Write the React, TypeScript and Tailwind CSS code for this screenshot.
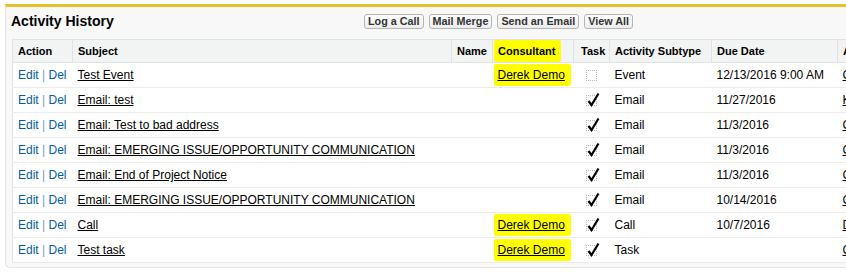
import React from 'react';

type Row = {
  subject: string;
  consultant?: string;
  done: boolean;
  subtype: string;
  due: string;
  assigned: string;
};

const rows: Row[] = [
  { subject: 'Test Event', consultant: 'Derek Demo', done: false, subtype: 'Event', due: '12/13/2016 9:00 AM', assigned: 'C' },
  { subject: 'Email: test', done: true, subtype: 'Email', due: '11/27/2016', assigned: 'K' },
  { subject: 'Email: Test to bad address', done: true, subtype: 'Email', due: '11/3/2016', assigned: 'C' },
  { subject: 'Email: EMERGING ISSUE/OPPORTUNITY COMMUNICATION', done: true, subtype: 'Email', due: '11/3/2016', assigned: 'C' },
  { subject: 'Email: End of Project Notice', done: true, subtype: 'Email', due: '11/3/2016', assigned: 'C' },
  { subject: 'Email: EMERGING ISSUE/OPPORTUNITY COMMUNICATION', done: true, subtype: 'Email', due: '10/14/2016', assigned: 'C' },
  { subject: 'Call', consultant: 'Derek Demo', done: true, subtype: 'Call', due: '10/7/2016', assigned: 'D' },
  { subject: 'Test task', consultant: 'Derek Demo', done: true, subtype: 'Task', due: '', assigned: 'C' },
];

const buttons = ['Log a Call', 'Mail Merge', 'Send an Email', 'View All'];

const TaskBox: React.FC<{ done: boolean }> = ({ done }) => (
  <span className="relative inline-block w-[11px] h-[11px] border border-dotted border-[#b9b9b9] align-middle">
    {done && (
      <svg className="absolute left-[0px] top-[-4px]" width="13" height="15" viewBox="0 0 13 15">
        <path d="M1.5 9 L4.5 13 L11.5 1.5" fill="none" stroke="#000" strokeWidth="2.2" strokeLinejoin="miter" />
      </svg>
    )}
  </span>
);

const Marker: React.FC<{ children: React.ReactNode; tall?: boolean }> = ({ children, tall }) => (
  <span className={`bg-[#ffff00] -ml-[4px] pl-[4px] pr-[6px] rounded-[2px] ${tall ? 'py-[5px]' : 'py-[4px]'}`}>{children}</span>
);

export default function App() {
  const th = 'px-[5px] text-left font-bold text-[11px] text-black border-r border-[#e0e3e5] bg-[#f2f3f3] whitespace-nowrap';
  const td = 'px-[5px] border-b border-[#ececec] align-middle';

  return (
    <div className="w-[846px] h-[272px] overflow-hidden bg-white pt-[4px] pl-[5px] font-['Liberation_Sans',Arial,sans-serif]">
      <div className="w-[900px] bg-[#f8f8f8] border-t-[3px] border-t-[#e6c12e] border-l border-b border-l-[#e3e3e3] border-b-[#e3e3e3] rounded-bl-[5px] pl-[6px] pb-[4px]">
        <div className="h-[32px] pb-[4px] flex items-center">
          <h3 className="w-[353px] -ml-[1px] text-[14px] font-bold text-black leading-none">Activity History</h3>
          <div className="flex gap-[5px]">
            {buttons.map((b) => (
              <span
                key={b}
                className="h-[15px] px-[3px] flex items-center border border-[#b5b5b5] rounded-[3px] bg-gradient-to-b from-white to-[#ececec] text-[10.8px] font-bold text-[#333]"
              >
                {b}
              </span>
            ))}
          </div>
        </div>
        <table className="table-fixed border-collapse w-[888px] bg-white border border-[#e0e3e5] text-[12px] text-black">
          <colgroup>
            <col className="w-[60px]" />
            <col className="w-[379px]" />
            <col className="w-[41px]" />
            <col className="w-[81px]" />
            <col className="w-[36px]" />
            <col className="w-[102px]" />
            <col className="w-[126px]" />
            <col />
          </colgroup>
          <thead>
            <tr className="h-[23px] border-b border-[#e0e3e5]">
              <th className={th}>Action</th>
              <th className={th}>Subject</th>
              <th className={th}>Name</th>
              <th className={th}>
                <Marker tall>Consultant</Marker>
              </th>
              <th className={`${th} pl-[7px]`}>Task</th>
              <th className={th}>Activity Subtype</th>
              <th className={th}>Due Date</th>
              <th className={th}>Assigned To</th>
            </tr>
          </thead>
          <tbody>
            {rows.map((r, i) => (
              <tr key={i} className="h-[25px]">
                <td className={`${td} text-[#015ba7] whitespace-nowrap`}>
                  Edit <span className="text-[#7a9cc0]">|</span> Del
                </td>
                <td className={`${td} whitespace-nowrap`}>
                  <span className="underline">{r.subject}</span>
                </td>
                <td className={td}></td>
                <td className={`${td} whitespace-nowrap`}>
                  {r.consultant && (
                    <Marker>
                      <span className="underline">{r.consultant}</span>
                    </Marker>
                  )}
                </td>
                <td className={`${td} pl-[12px]`}>
                  <TaskBox done={r.done} />
                </td>
                <td className={td}>{r.subtype}</td>
                <td className={`${td} whitespace-nowrap`}>{r.due}</td>
                <td className={`${td} whitespace-nowrap`}>
                  <span className="underline">{r.assigned}</span>
                </td>
              </tr>
            ))}
          </tbody>
        </table>
      </div>
    </div>
  );
}
